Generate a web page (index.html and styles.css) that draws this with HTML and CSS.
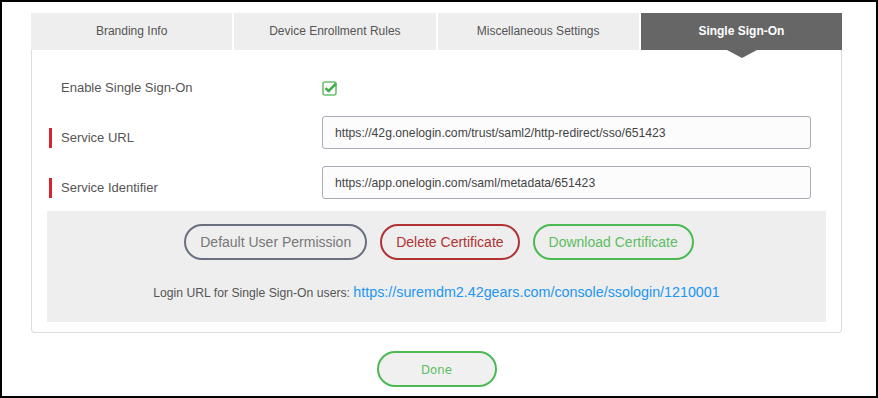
FILE: index.html
```html
<!DOCTYPE html>
<html lang="en">
<head>
  <meta charset="UTF-8" />
  <meta name="viewport" content="width=device-width, initial-scale=1" />
  <title>Single Sign-On</title>
  <link rel="stylesheet" href="styles.css">
</head>
<body>

  <div class="frame">

    <!-- Pestañas -->
    <div class="tabs">
      <div class="tab">Branding Info</div>
      <div class="tab">Device Enrollment Rules</div>
      <div class="tab">Miscellaneous Settings</div>
      <div class="tab active">Single Sign-On</div>
    </div>

    <!-- Panel SSO -->
    <div class="panel">
      <div class="form">
        <div class="row row-check">
          <label class="label">Enable Single Sign-On</label>
          <svg class="check" width="16" height="16" viewBox="0 0 16 16">
            <rect x="1" y="2" width="13" height="13" rx="2" fill="none" stroke="#6cc070" stroke-width="1.6"/>
            <path d="M3.6 8.2 L6.6 11.2 L14.2 3.4" fill="none" stroke="#3fae49" stroke-width="2.6" stroke-linejoin="round"/>
          </svg>
        </div>

        <div class="row">
          <label class="label required">Service URL</label>
          <input class="field" type="text" value="https://42g.onelogin.com/trust/saml2/http-redirect/sso/651423">
        </div>

        <div class="row">
          <label class="label required">Service Identifier</label>
          <input class="field" type="text" value="https://app.onelogin.com/saml/metadata/651423">
        </div>
      </div>

      <div class="actions">
        <div class="buttons">
          <button class="pill gray">Default User Permission</button>
          <button class="pill red">Delete Certificate</button>
          <button class="pill green">Download Certificate</button>
        </div>
        <p class="login-url">Login URL for Single Sign-On users: <a href="#">https://suremdm2.42gears.com/console/ssologin/1210001</a></p>
      </div>
    </div>

    <div class="footer">
      <button class="pill green done">Done</button>
    </div>

  </div>

</body>
</html>
```

FILE: styles.css
```css
body {
  margin: 0;
  font-family: "Liberation Sans", Arial, sans-serif;
  background-color: #fff;
}

.frame {
  box-sizing: border-box;
  width: 878px;
  height: 398px;
  border: 2px solid #000;
  padding: 11px 34px 0 29px;
}

/* Tabs */
.tabs {
  display: grid;
  grid-template-columns: repeat(4, 1fr);
  gap: 2px;
  background-color: #fff;
}

.tab {
  position: relative;
  height: 37px;
  line-height: 37px;
  text-align: center;
  font-size: 12px;
  color: #555;
  background-color: #eeeeee;
}

.tab.active {
  background-color: #666;
  color: #fff;
  font-weight: bold;
}

.tab.active::after {
  content: "";
  position: absolute;
  left: 50%;
  bottom: -8px;
  margin-left: -14px;
  border-left: 15px solid transparent;
  border-right: 15px solid transparent;
  border-top: 8px solid #666;
}

/* Panel */
.panel {
  border: 1px solid #ddd;
  border-top: none;
  border-radius: 0 0 4px 4px;
  padding: 0 15px 10px 15px;
}

.form {
  padding: 28px 15px 12px 2px;
}

.row {
  display: flex;
  align-items: flex-start;
  margin-bottom: 17px;
}

.row:last-child {
  margin-bottom: 0;
}

.row-check {
  align-items: center;
  margin-bottom: 18px;
}

.label {
  width: 261px;
  padding-left: 12px;
  font-size: 13px;
  line-height: 20px;
  color: #555;
}

.label.required {
  margin-top: 12px;
  border-left: 3px solid #d9232e;
  padding-left: 9px;
}

.check {
  display: block;
}

.field {
  box-sizing: border-box;
  width: 489px;
  height: 33px;
  border: 1px solid #a8abb4;
  border-radius: 3px;
  background-color: #fcfcfc;
  padding: 0 12px;
  font-family: "Liberation Sans", Arial, sans-serif;
  font-size: 12.2px;
  color: #444;
}

/* Acciones */
.actions {
  background-color: #eeeeee;
  height: 111px;
  box-sizing: border-box;
  padding-top: 13px;
  text-align: center;
}

.buttons {
  display: flex;
  justify-content: center;
  gap: 13px;
  padding-left: 5px;
}

.pill {
  height: 36px;
  padding: 0 14px;
  border-radius: 18px;
  border: 2px solid;
  background-color: transparent;
  font-family: "Liberation Sans", Arial, sans-serif;
  font-size: 14px;
  cursor: pointer;
}

.pill.gray {
  border-color: #6b7080;
  color: #777;
}

.pill.red {
  border-color: #b03232;
  color: #b03232;
}

.pill.green {
  border-color: #4cba52;
  color: #5cbd62;
}

.login-url {
  margin: 24px 0 0;
  font-size: 12.2px;
  color: #555;
}

.login-url a {
  font-size: 14.3px;
  color: #2196f3;
  text-decoration: none;
}

/* Pie */
.footer {
  display: flex;
  justify-content: center;
  padding-top: 18px;
}

.pill.done {
  width: 120px;
  background-color: #f0f0f0;
  font-family: "DejaVu Sans Condensed", "Liberation Sans", sans-serif;
  font-size: 13px;
}
```
